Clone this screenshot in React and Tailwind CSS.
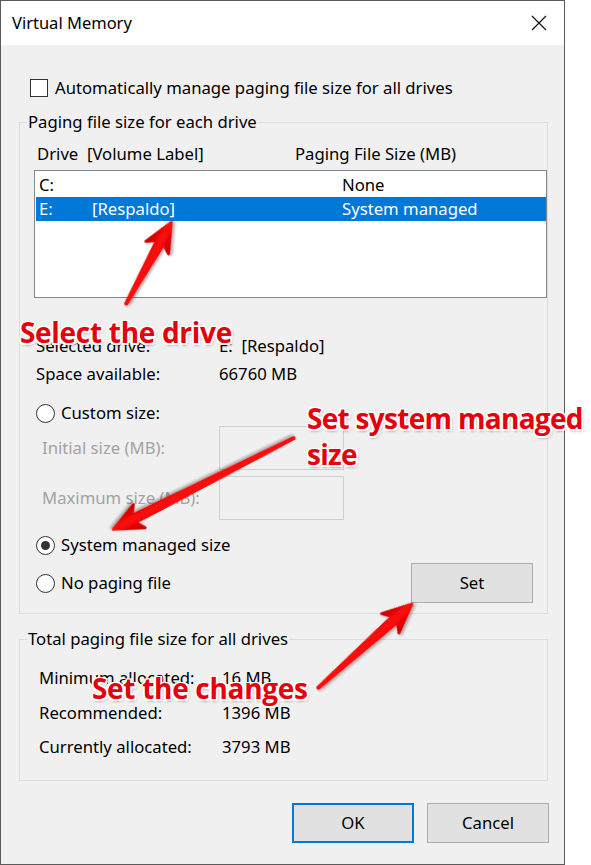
import React from 'react';

const ui = "font-['Segoe_UI','Noto_Sans',sans-serif] text-[16.7px] text-black";

const Radio = ({ checked, label }) => (
  <div className="flex items-center h-[22px]">
    <span className="w-[19px] h-[19px] rounded-full border border-[#333] bg-white flex items-center justify-center">
      {checked && <span className="w-[9px] h-[9px] rounded-full bg-[#333]" />}
    </span>
    <span className="ml-[6px]">{label}</span>
  </div>
);

const Field = ({ label, className }) => (
  <div className={`flex items-center h-[44px] ${className || ''}`}>
    <span className="w-[177px] ml-[22px] text-[#a3a3a3]">{label}</span>
    <span className="w-[125px] h-[44px] border border-[#cfcfcf] bg-[#f0f0f0]" />
  </div>
);

const InfoRow = ({ label, value, className, w = 'w-[183px]' }) => (
  <div className={`flex items-center h-[22px] ${className || ''}`}>
    <span className={w}>{label}</span>
    <span>{value}</span>
  </div>
);

const Button = ({ children, primary }) => (
  <button
    className={`w-[122px] h-[40px] bg-[#e1e1e1] ${primary ? 'border-2 border-[#0078d7]' : 'border border-[#adadad]'}`}
  >
    {children}
  </button>
);

function Arrow({ from, to }) {
  const dx = to[0] - from[0];
  const dy = to[1] - from[1];
  const L = Math.hypot(dx, dy) - 1.5;
  const a = (Math.atan2(dy, dx) * 180) / Math.PI;
  const pts = [
    [0, -0.6],
    [L - 23, -4],
    [L - 29, -13],
    [L, 0],
    [L - 29, 13],
    [L - 23, 4],
    [0, 0.6],
  ]
    .map((p) => p.join(','))
    .join(' ');
  return (
    <g transform={`translate(${from[0]} ${from[1]}) rotate(${a})`} filter="url(#arrowShadow)">
      <polygon points={pts} fill="url(#arrowRed)" stroke="url(#arrowRed)" strokeWidth="3" strokeLinejoin="round" />
    </g>
  );
}

const noteClass =
  "absolute font-['Open_Sans','Noto_Sans',sans-serif] font-bold text-[28px] leading-[36px] tracking-[-0.3px] text-[#e4000c] whitespace-nowrap [text-shadow:1.5px_0_0_#fff,-1.5px_0_0_#fff,0_1.5px_0_#fff,0_-1.5px_0_#fff,1.5px_1.5px_0_#fff,-1.5px_-1.5px_0_#fff,1.5px_-1.5px_0_#fff,-1.5px_1.5px_0_#fff,1px_2px_3px_rgba(0,0,0,0.45)]";

export default function App() {
  return (
    <div className={`relative w-[591px] h-[865px] bg-white overflow-hidden ${ui}`}>
      <div className="w-[565px] h-[865px] border border-[#5b5b5b] bg-[#f0f0f0] flex flex-col">
        {/* Title bar */}
        <div className="h-[44px] bg-white flex items-center justify-between pl-[11px] pr-[17px]">
          <span className="text-[16.5px]">Virtual Memory</span>
          <svg width="16" height="16" viewBox="0 0 16 16">
            <path d="M1 1L15 15M15 1L1 15" stroke="#111" strokeWidth="1.2" />
          </svg>
        </div>

        <div className="pl-[18px] flex flex-col">
          {/* Auto manage checkbox */}
          <div className="flex items-center h-[22px] mt-[32px] ml-[11px]">
            <span className="w-[18px] h-[18px] border border-[#333] bg-white" />
            <span className="ml-[7px]">Automatically manage paging file size for all drives</span>
          </div>

          {/* Paging file size for each drive */}
          <fieldset className="w-[529px] border border-[#dcdcdc] mt-[12px] pb-[10px]">
            <legend className="ml-[7px] px-[1px] leading-[22px]">Paging file size for each drive</legend>

            <div className="flex items-center h-[22px] mt-[10px] ml-[17px]">
              <span className="w-[258px]">Drive&nbsp; [Volume Label]</span>
              <span>Paging File Size (MB)</span>
            </div>

            <div className="ml-[14px] mt-[5px] h-[128px] border border-[#828790] bg-white pt-[2px] pl-[1px]">
              <div className="flex items-center h-[24px] pl-[3px]">
                <span className="w-[303px]">C:</span>
                <span>None</span>
              </div>
              <div className="flex items-center h-[24px] pl-[3px] bg-[#0078d7] text-white">
                <span className="w-[53px]">E:</span>
                <span className="w-[250px]">[Respaldo]</span>
                <span>System managed</span>
              </div>
            </div>

            <div className="ml-[16px]">
              <InfoRow className="mt-[37px]" label="Selected drive:" value={'E:\u00a0\u00a0[Respaldo]'} />
              <InfoRow className="mt-[6px]" label="Space available:" value="66760 MB" />

              <div className="mt-[17px]">
                <Radio label="Custom size:" />
              </div>
              <Field className="mt-[2px] -ml-[16px]" label="Initial size (MB):" />
              <Field className="mt-[6px] -ml-[16px]" label="Maximum size (MB):" />

              <div className="mt-[14px]">
                <Radio checked label="System managed size" />
              </div>
              <div className="mt-[7px] flex items-center justify-between pr-[14px]">
                <Radio label="No paging file" />
                <Button>Set</Button>
              </div>
            </div>
          </fieldset>

          {/* Total paging file size */}
          <fieldset className="w-[529px] border border-[#dcdcdc] mt-[14px] pb-[22px]">
            <legend className="ml-[7px] px-[1px] leading-[22px]">Total paging file size for all drives</legend>
            <div className="ml-[19px]">
              <InfoRow w="w-[183px]" className="mt-[17px]" label="Minimum allocated:" value="16 MB" />
              <InfoRow w="w-[183px]" className="mt-[13px]" label="Recommended:" value="1396 MB" />
              <InfoRow w="w-[183px]" className="mt-[12px]" label="Currently allocated:" value="3793 MB" />
            </div>
          </fieldset>

          {/* Dialog buttons */}
          <div className="mt-[22px] flex justify-end gap-[13px] pr-[15px]">
            <Button primary>OK</Button>
            <Button>Cancel</Button>
          </div>
        </div>
      </div>

      {/* Annotations */}
      <svg className="absolute inset-0 pointer-events-none" width="591" height="865">
        <defs>
          <linearGradient id="arrowRed" x1="0" y1="0" x2="0" y2="1">
            <stop offset="0" stopColor="#c60000" />
            <stop offset="0.5" stopColor="#ff0a0a" />
            <stop offset="1" stopColor="#c80000" />
          </linearGradient>
          <filter id="arrowShadow" x="-20%" y="-20%" width="140%" height="140%">
            <feDropShadow dx="1" dy="2" stdDeviation="1.5" floodColor="#000" floodOpacity="0.35" />
          </filter>
        </defs>
        <Arrow from={[126, 304]} to={[172, 221]} />
        <Arrow from={[294, 438]} to={[112, 530]} />
        <Arrow from={[318, 688]} to={[413, 603]} />
      </svg>

      <div className={`${noteClass} left-[20px] top-[314px]`}>Select the drive</div>
      <div className={`${noteClass} left-[307px] top-[400px] tracking-[-0.7px]`}>
        Set system managed
        <br />
        size
      </div>
      <div className={`${noteClass} left-[92px] top-[670px]`}>Set the changes</div>
    </div>
  );
}
